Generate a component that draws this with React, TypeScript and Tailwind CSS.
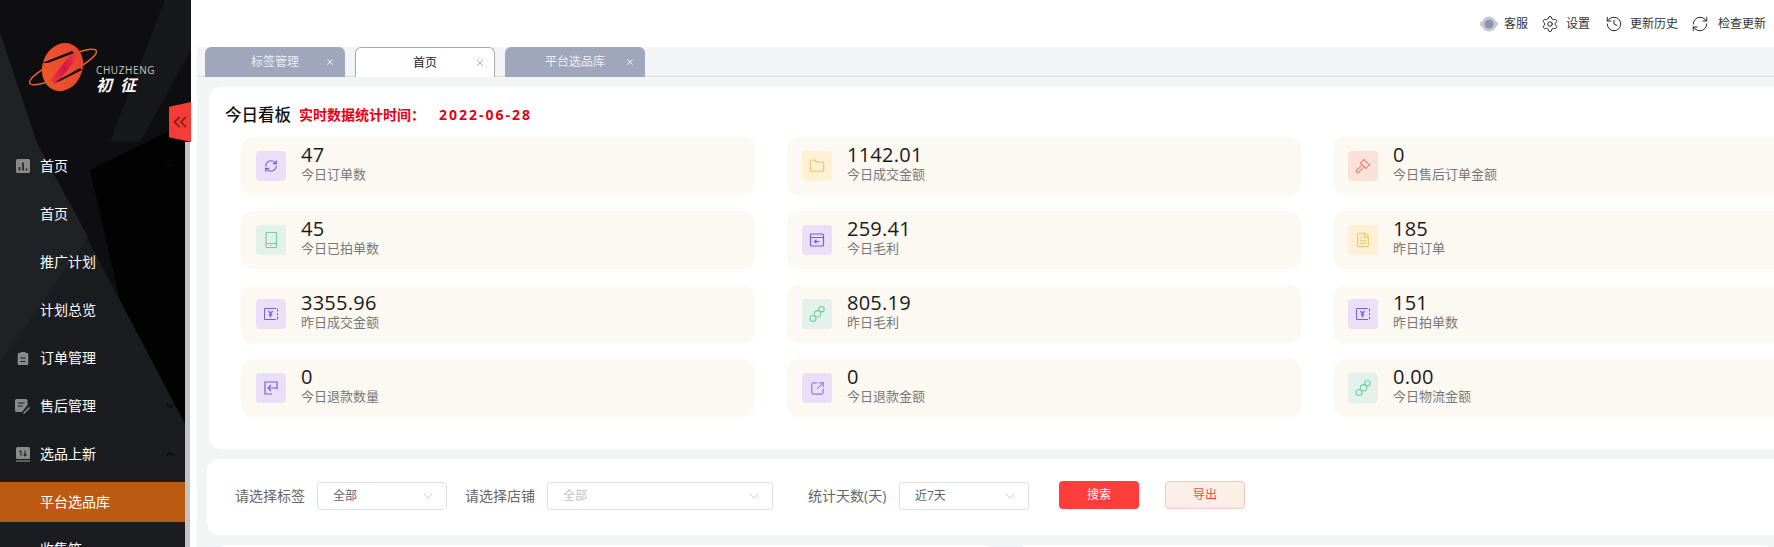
import { ChevronDown, ChevronUp, ChevronsLeft, FileText, Folder, Gavel, History, RefreshCw, Settings, SquareArrowOutUpRight, X } from "lucide-react";
import type { ReactNode } from "react";

const P = "#7b5fd6";
const G = "#6fd0a4";
const Y = "#ecc45c";

function Tablet() {
  return (
    <svg width="16" height="18" viewBox="0 0 16 18" fill="none" stroke={G} strokeWidth="1.2">
      <rect x="3" y="1.500" width="10.500" height="15" rx="1" />
      <path d="M3 12.500h10.500M7 14.500h1.500" />
    </svg>
  );
}
function Box() {
  return (
    <svg width="16" height="16" viewBox="0 0 16 16" fill="none" stroke={P} strokeWidth="1.2">
      <rect x="1.500" y="2" width="13" height="12" rx="1" />
      <path d="M1.500 5.500h13M10.500 9.500h-5M7.500 7.800 5.500 9.500l2 1.700" />
    </svg>
  );
}
function Yen() {
  return (
    <svg width="16" height="14" viewBox="0 0 16 14" fill="none" stroke={P} strokeWidth="1">
      <path d="M13 1.500H1.500v11H13" />
      <path d="M14.500 1.500v3M14.500 6v2M14.500 9.500v3" />
      <path d="M5.500 4l2 2.800L9.500 4M7.500 6.800v3.400M5.800 7.800h3.400" strokeWidth="1.300" />
    </svg>
  );
}
function Rings({ color = G }: { color?: string }) {
  return (
    <svg width="16" height="18" viewBox="0 0 16 18" fill="none" stroke={color} strokeWidth="1.100">
      <circle cx="4" cy="13.500" r="3" />
      <circle cx="8.500" cy="8.800" r="3.200" />
      <circle cx="12.500" cy="4.200" r="2.700" />
    </svg>
  );
}
function BackBox() {
  return (
    <svg width="16" height="16" viewBox="0 0 16 16" fill="none" stroke={P} strokeWidth="1.200">
      <path d="M14 9.500V2H2v12h7" />
      <path d="M14 8H5M8 5 5 8l3 3" />
    </svg>
  );
}

const stats: { v: string; l: string; bg: string; icon: ReactNode }[] = [
  { v: "47", l: "今日订单数", bg: "bg-[#e9dff6]", icon: <RefreshCw size={14} color={P} strokeWidth={2} /> },
  { v: "1142.01", l: "今日成交金额", bg: "bg-[#fdf0d5]", icon: <Folder size={16} color={Y} strokeWidth={1.600} /> },
  { v: "0", l: "今日售后订单金额", bg: "bg-[#fce1da]", icon: <Gavel size={16} color="#ea8a72" strokeWidth={1.800} /> },
  { v: "45", l: "今日已拍单数", bg: "bg-[#e3f1ea]", icon: <Tablet /> },
  { v: "259.41", l: "今日毛利", bg: "bg-[#e9dff6]", icon: <Box /> },
  { v: "185", l: "昨日订单", bg: "bg-[#fdf0d5]", icon: <FileText size={16} color={Y} strokeWidth={1.600} /> },
  { v: "3355.96", l: "昨日成交金额", bg: "bg-[#e9dff6]", icon: <Yen /> },
  { v: "805.19", l: "昨日毛利", bg: "bg-[#e3f1ea]", icon: <Rings /> },
  { v: "151", l: "昨日拍单数", bg: "bg-[#e9dff6]", icon: <Yen /> },
  { v: "0", l: "今日退款数量", bg: "bg-[#e9dff6]", icon: <BackBox /> },
  { v: "0", l: "今日退款金额", bg: "bg-[#e9dff6]", icon: <SquareArrowOutUpRight size={15} color={P} strokeWidth={1.500} /> },
  { v: "0.00", l: "今日物流金额", bg: "bg-[#e3f1ea]", icon: <Rings /> },
];

function Logo() {
  return (
    <svg width="70" height="48" viewBox="0 0 70 48" className="shrink-0">
      <defs>
        <linearGradient id="logoA" x1="0" y1="0" x2="1" y2="1">
          <stop offset="0" stopColor="#ee5a2a" />
          <stop offset="1" stopColor="#e8402e" />
        </linearGradient>
        <linearGradient id="logoB" x1="0" y1="1" x2="1" y2="0">
          <stop offset="0" stopColor="#e83a3a" />
          <stop offset="0.5" stopColor="#d4134f" />
          <stop offset="1" stopColor="#e8403a" />
        </linearGradient>
      </defs>
      <ellipse cx="35" cy="24" rx="37" ry="8" transform="rotate(-26 35 24)" fill="none" stroke="#e0652a" strokeWidth="1.500" />
      <ellipse cx="34.500" cy="24" rx="24.500" ry="20" transform="rotate(-70 34.500 24)" fill="url(#logoA)" />
      <path d="M25 40 48 10" stroke="url(#logoB)" strokeWidth="7" />
      <polygon points="14,20 44,8 46,10 20,20" fill="#101012" />
      <polygon points="27,39 52,25 54,27 32,38" fill="#101012" />
    </svg>
  );
}

function SideIcon({ kind }: { kind: number }) {
  const c = "#8a8a8a";
  if (kind === 0)
    return (
      <svg width="14" height="14" viewBox="0 0 14 14">
        <rect width="14" height="14" rx="1.500" fill={c} />
        <path d="M3.500 8v3.500M7 3.500v8M10.500 9.500v2" stroke="#2a2a2c" strokeWidth="1.800" />
      </svg>
    );
  if (kind === 1)
    return (
      <svg width="14" height="14" viewBox="0 0 14 14">
        <path d="M2.500 2H4.500V1H9.500V2H11.500a.8.8 0 0 1 .8.8V13.200a.8.8 0 0 1-.8.8H2.500a.8.8 0 0 1-.8-.8V2.800a.8.8 0 0 1 .8-.8Z" fill={c} />
        <path d="M4.500 7h5M4.500 10.500h5" stroke="#1b1b1e" strokeWidth="1.100" />
      </svg>
    );
  if (kind === 2)
    return (
      <svg width="16" height="15" viewBox="0 0 16 15">
        <path d="M1.500 0H11a1.500 1.500 0 0 1 1.500 1.500V6L7 13H1.500A1.500 1.500 0 0 1 0 11.500V1.500A1.500 1.500 0 0 1 1.500 0Z" fill={c} />
        <path d="M3 4h6.500M3 7h4.500" stroke="#1b1b1e" strokeWidth="1.200" />
        <path d="M8.500 14.500 14.500 8.500" stroke={c} strokeWidth="1.500" />
      </svg>
    );
  return (
    <svg width="14" height="15" viewBox="0 0 14 15">
      <rect width="14" height="12" rx="1.500" fill={c} />
      <path d="M0 14h14" stroke={c} strokeWidth="1.200" />
      <path d="M5 9V3.500M3.500 5 5 3.500M9 3.500V9M7.500 7.500 9 9 10.500 7.500" stroke="#2a2a2c" strokeWidth="1.100" fill="none" />
    </svg>
  );
}

function NavItem({ label, icon, chev }: { label: string; icon?: number; chev?: "up" | "down" }) {
  return (
    <div className="flex h-12 items-center">
      <div className="flex w-10 justify-center pl-[6px]">{icon !== undefined && <SideIcon kind={icon} />}</div>
      <span className="flex-1 text-sm text-white">{label}</span>
      {chev === "up" && <ChevronUp size={14} color="#0a0a0a" className="mr-[8px]" />}
      {chev === "down" && <ChevronDown size={14} color="#0a0a0a" className="mr-[8px]" />}
    </div>
  );
}

function Tab({ label, active }: { label: string; active?: boolean }) {
  return (
    <div
      className={
        active
          ? "grid h-[30px] w-[140px] grid-cols-[1fr_auto_1fr] items-center rounded-t-[6px] border border-b-0 border-[#a9a9a9] bg-white pl-[9px] pr-[9px] text-xs text-[#222]"
          : "grid h-[30px] w-[140px] grid-cols-[1fr_auto_1fr] items-center rounded-t-[6px] bg-[#a0a6bc] pl-[10px] pr-[10px] text-xs text-[#eceef3]"
      }
    >
      <span />
      <span>{label}</span>
      <X size={10} strokeWidth={2} className={active ? "justify-self-end text-[#999]" : "justify-self-end text-white"} />
    </div>
  );
}

function Select({ width, value, muted }: { width: string; value: string; muted?: boolean }) {
  return (
    <div className={`flex h-7 items-center justify-between rounded-[4px] border border-[#dcdfe6] bg-white pl-[15px] pr-[10px] ${width}`}>
      <span className={muted ? "text-xs text-[#c0c4cc]" : "text-xs text-[#606266]"}>{value}</span>
      <ChevronDown size={16} color="#c0c4cc" strokeWidth={1.200} />
    </div>
  );
}

export default function App() {
  return (
    <div className="flex h-[547px] w-[1774px] overflow-hidden bg-white font-['Open_Sans','Noto_Sans_CJK_SC',sans-serif]">
      <aside className="relative flex w-[191px] shrink-0 flex-col">
        <svg className="absolute inset-0" width="191" height="547" viewBox="0 0 191 547">
          <rect width="191" height="547" fill="#1b1c20" />
          <polygon points="0,0 191,0 191,435 37,143 0,33" fill="#0e0e10" />
          <polygon points="90,170 191,120 191,435 120,300" fill="#030303" />
          <polygon points="165,0 191,0 191,50 140,142 110,142" fill="#17181b" />
          <polygon points="0,33 37,143 88,237 0,363" fill="#202125" />
        </svg>
        <div className="relative flex h-[142px] shrink-0 items-start pl-[28px] pt-[43px]">
          <Logo />
          <div className="-ml-[2px] flex flex-col pt-[21px]">
            <span className="text-[10px] leading-[12px] tracking-[0.6px] text-[#c8c8c8]">CHUZHENG</span>
            <span className="flex gap-2 text-base font-bold italic leading-[18px] text-white">
              <span>初</span>
              <span>征</span>
            </span>
          </div>
        </div>
        <div className="relative flex min-h-0 flex-1">
          <nav className="w-[185px]">
            <NavItem label="首页" icon={0} chev="up" />
            <NavItem label="首页" />
            <NavItem label="推广计划" />
            <NavItem label="计划总览" />
            <NavItem label="订单管理" icon={1} />
            <NavItem label="售后管理" icon={2} chev="down" />
            <NavItem label="选品上新" icon={3} chev="up" />
            <div className="mt-[4px] flex h-10 items-center bg-[#bd5a12] pl-10 text-sm text-white">平台选品库</div>
            <div className="mt-[3px]">
              <NavItem label="收集箱" />
            </div>
          </nav>
          <div className="w-[6px] bg-white">
            <div className="h-full w-[5px] bg-[#c4c4c4]" />
          </div>
        </div>
        <div className="absolute left-[169px] top-[102px] flex h-10 w-[22px] items-center justify-center bg-[#f63c38] [clip-path:polygon(0_12%,100%_0,100%_100%,0_88%)]">
          <ChevronsLeft size={24} color="#8f2018" strokeWidth={2} />
        </div>
      </aside>

      <main className="min-w-0 flex-1">
        <header className="flex h-[47px] items-center justify-end pr-2 text-xs text-[#333]">
          <svg width="18" height="16" viewBox="0 0 18 16" className="mr-[6px]">
            <circle cx="9" cy="8" r="7.500" fill="#c3c9d8" />
            <circle cx="9" cy="8" r="4.500" fill="#8d95ab" />
            <rect x="0" y="6" width="2" height="4" fill="#c3c9d8" />
            <rect x="16" y="6" width="2" height="4" fill="#c3c9d8" />
          </svg>
          <span>客服</span>
          <Settings size={18} strokeWidth={1.200} className="ml-[13px] mr-[7px] text-[#111]" />
          <span>设置</span>
          <History size={18} strokeWidth={1.200} className="ml-[15px] mr-[7px] text-[#111]" />
          <span>更新历史</span>
          <RefreshCw size={18} strokeWidth={1.200} className="ml-[13px] mr-[9px] text-[#111]" />
          <span>检查更新</span>
        </header>

        <div className="ml-[6px] h-[500px] bg-[#f3f4f6]">
          <div className="flex h-[30px] gap-[10px] border-b border-[#d8dae0] pl-2">
            <Tab label="标签管理" />
            <Tab label="首页" active />
            <Tab label="平台选品库" />
          </div>

          <section className="ml-3 mt-[10px] h-[362px] w-[1640px] rounded-xl bg-white pl-[32px]">
            <div className="-ml-[16px] flex h-[50px] items-center pt-[6px]">
              <span className="text-[16.5px] font-medium text-[#111]">今日看板</span>
              <span className="ml-[8px] text-sm font-bold text-[#e60012]">实时数据统计时间：</span>
              <span className="ml-[14px] text-sm font-bold tracking-[2px] text-[#e60012]">2022-06-28</span>
            </div>
            <div className="grid grid-cols-[514px_514px_514px] gap-x-8 gap-y-4">
              {stats.map((s, i) => (
                <div key={i} className="flex h-[58px] items-center rounded-xl bg-[#fcf9f3] pl-[15px]">
                  <div className={`flex h-[30px] w-[30px] items-center justify-center rounded-[4px] ${s.bg}`}>{s.icon}</div>
                  <div className="ml-[15px] -mt-[5px] flex flex-col">
                    <span className="text-xl leading-[20px] tracking-[0.25px] text-[#1a1a1a]">{s.v}</span>
                    <span className="text-[13px] leading-[18px] text-[#777]">{s.l}</span>
                  </div>
                </div>
              ))}
            </div>
          </section>

          <section className="ml-[10px] mt-[10px] flex h-[76px] w-[1640px] items-center rounded-xl bg-white pb-[2px] pl-[28px]">
            <span className="w-[70px] text-sm text-[#666]">请选择标签</span>
            <div className="ml-3">
              <Select width="w-[130px]" value="全部" />
            </div>
            <span className="ml-[18px] w-[70px] text-sm text-[#666]">请选择店铺</span>
            <div className="ml-3">
              <Select width="w-[226px]" value="全部" muted />
            </div>
            <span className="ml-[35px] w-[79px] whitespace-nowrap text-sm text-[#666]">统计天数(天)</span>
            <div className="ml-3">
              <Select width="w-[130px]" value="近7天" />
            </div>
            <button className="mb-[2px] ml-[30px] h-7 w-20 rounded-[4px] bg-[#ff3d3a] text-xs text-white">搜索</button>
            <button className="mb-[2px] ml-[26px] h-7 w-20 rounded-[4px] border border-[#f5c9bb] bg-[#feeeea] text-xs text-[#ee4a44]">导出</button>
          </section>

          <div className="ml-[18px] mt-[10px] flex gap-[20px]">
            <div className="h-8 w-[825px] rounded-xl bg-white" />
            <div className="h-8 w-[800px] rounded-xl bg-white" />
          </div>
        </div>
      </main>
    </div>
  );
}
